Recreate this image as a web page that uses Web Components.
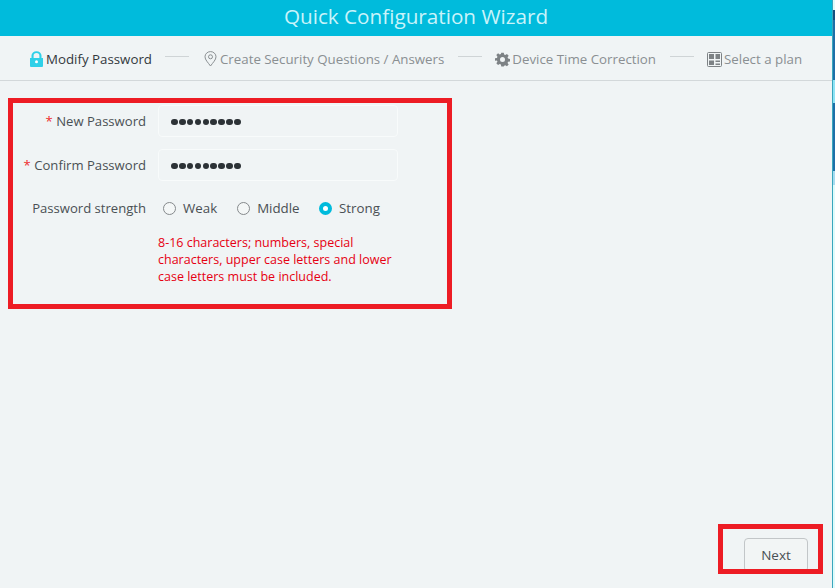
<!DOCTYPE html>
<html>
<head>
<meta charset="utf-8">
<title>Quick Configuration Wizard</title>
<style>
  html, body { margin: 0; height: 100%; overflow: hidden; background: #dffbfb; }
  body { font-family: "Open Sans", "Noto Sans", sans-serif; }
</style>
</head>
<body>

<template id="wizard-step-tpl">
  <style>
    :host { display: flex; align-items: center; gap: 2px; color: #8a8f92; font-size: 13.3px; white-space: nowrap; }
    :host([active]) { color: #33393d; }
    .icon { display: flex; width: 15px; height: 16px; align-items: center; justify-content: center; }
  </style>
  <span class="icon"><slot name="icon"></slot></span>
  <slot></slot>
</template>

<template id="form-row-tpl">
  <style>
    :host { display: flex; align-items: center; font-size: 13.3px; color: #4a5054; }
    .label { width: 133px; text-align: right; margin-right: 12px; white-space: nowrap; flex: none; font-size: 13.1px; }
    .req { color: #ee2b2b; }
  </style>
  <div class="label"><span class="req" id="req"></span><slot name="label"></slot></div>
  <slot></slot>
</template>

<template id="pass-input-tpl">
  <style>
    :host { display: flex; align-items: center; box-sizing: border-box; width: 240px; height: 32px; padding: 2px 0 0 12px;
      border: 1px solid #f8fbfb; border-radius: 4px; color: #2c3236; }
    .dots { display: flex; gap: 1.2px; }
    .dots i { width: 6.7px; height: 6.7px; border-radius: 50%; background: currentColor; }
  </style>
  <div class="dots"><i></i><i></i><i></i><i></i><i></i><i></i><i></i><i></i><i></i></div>
</template>

<template id="radio-opt-tpl">
  <style>
    :host { display: flex; align-items: center; gap: 7px; font-size: 13.3px; color: #4a5054; }
    .dot { box-sizing: border-box; width: 13px; height: 13px; border-radius: 50%; border: 1px solid #85898c; background: #f4f7f7; }
    :host([checked]) .dot { border: 4px solid #00bbdc; background: #fff; }
  </style>
  <span class="dot"></span><slot></slot>
</template>

<script>
  function tplElement(name, tplId, extra) {
    customElements.define(name, class extends HTMLElement {
      constructor() {
        super();
        this.attachShadow({ mode: 'open' });
        this.shadowRoot.appendChild(document.getElementById(tplId).content.cloneNode(true));
      }
      connectedCallback() {
        if (extra) extra(this);
      }
    });
  }

  tplElement('wizard-step', 'wizard-step-tpl');
  tplElement('pass-input', 'pass-input-tpl');
  tplElement('radio-opt', 'radio-opt-tpl');
  tplElement('form-row', 'form-row-tpl', el => {
    if (el.hasAttribute('required')) el.shadowRoot.getElementById('req').textContent = '* ';
  });

  customElements.define('wizard-steps', class extends HTMLElement {
    constructor() {
      super();
      this.attachShadow({ mode: 'open' });
      this.shadowRoot.innerHTML = `
        <style>
          :host { display: flex; align-items: center; height: 45px; box-sizing: border-box; padding: 2px 0 0 29px;
            border-bottom: 1px solid #d3d8da; gap: 13.5px; }
        </style>
        <slot></slot>`;
    }
  });

  customElements.define('step-line', class extends HTMLElement {
    constructor() {
      super();
      this.attachShadow({ mode: 'open' });
      this.shadowRoot.innerHTML = `
        <style>:host { display: block; width: 24px; height: 1px; background: #cfd4d6; margin-top: -5px; }</style>`;
    }
  });

  customElements.define('wizard-form', class extends HTMLElement {
    constructor() {
      super();
      this.attachShadow({ mode: 'open' });
      this.shadowRoot.innerHTML = `
        <style>
          :host { display: block; box-sizing: border-box; width: 444px; height: 211px; margin: 17px 0 0 8px;
            border: 5px solid #ed1c24; padding: 2px 0 0 0; }
          .rows { display: flex; flex-direction: column; }
          ::slotted(form-row) { margin-bottom: 12px; }
          ::slotted(form-row:nth-of-type(3)) { margin-top: 6px; }
          ::slotted(.hint) { margin: 5px 0 0 145px; width: 250px; color: #e60012; font-size: 12.5px; line-height: 17.2px; }
        </style>
        <div class="rows"><slot></slot></div>`;
    }
  });

  customElements.define('next-button', class extends HTMLElement {
    constructor() {
      super();
      this.attachShadow({ mode: 'open' });
      this.shadowRoot.innerHTML = `
        <style>
          :host { display: flex; align-items: center; justify-content: center; box-sizing: border-box; width: 64px; height: 34px;
            border: 1px solid #c2c6c8; border-radius: 4px; background: #f2f5f5; color: #4a5054; font-size: 13.5px; }
        </style>
        <slot></slot>`;
    }
  });

  customElements.define('wizard-app', class extends HTMLElement {
    constructor() {
      super();
      this.attachShadow({ mode: 'open' });
      this.shadowRoot.innerHTML = `
        <style>
          :host { display: flex; flex-direction: column; position: relative; box-sizing: border-box; flex: none; width: 833px; height: 588px;
            background: #f0f4f5; border-right: 1px solid #3aa6bd; font-family: "Open Sans", "Noto Sans", sans-serif; }
          header { height: 36px; box-sizing: border-box; padding-bottom: 5px; background: #00bbdc; color: #c9f3fa; font-size: 20.7px;
            display: flex; align-items: center; justify-content: center; }
          .foot { margin-top: auto; display: flex; justify-content: flex-end; padding: 0 24px 16px 0; }
          .mark { position: absolute; left: 718px; top: 524px; width: 105px; height: 50px; box-sizing: border-box; border: 5px solid #ed1c24; }
        </style>
        <header>Quick Configuration Wizard</header>
        <slot name="steps"></slot>
        <slot name="form"></slot>
        <div class="foot"><slot name="next"></slot></div>
        <div class="mark"></div>`;
    }
  });

  // the sliver of desktop showing right of the window
  customElements.define('desktop-edge', class extends HTMLElement {
    constructor() {
      super();
      this.attachShadow({ mode: 'open' });
      this.shadowRoot.innerHTML = `
        <style>
          :host { display: block; flex: 1; height: 588px;
            background: linear-gradient(#dffbfb 0 10px, #14507f 10px 20px, #1d6fa8 20px 80px, #8fe4f5 80px 103px, #1d6fa8 103px 171px, #a8dcf0 171px 185px, #dffbfb 185px); }
        </style>`;
    }
  });

  customElements.define('page-frame', class extends HTMLElement {
    constructor() {
      super();
      this.attachShadow({ mode: 'open' });
      this.shadowRoot.innerHTML = `<style>:host { display: flex; width: 835px; height: 588px; }</style><slot></slot>`;
    }
  });
</script>

<page-frame>
<wizard-app>
  <wizard-steps slot="steps">
    <wizard-step active>
      <svg slot="icon" width="15" height="16" viewBox="0 0 15 16"><path fill="#2fd0e8" d="M1 7h1.500V4.600a5 4.400 0 0 1 10 0V7H14v8a1 1 0 0 1-1 1H2a1 1 0 0 1-1-1zM4.600 7h5.800V4.600a2.900 2.600 0 0 0-5.800 0z"/><circle cx="7.500" cy="10.800" r="1.500" fill="#fff"/></svg>
      Modify Password
    </wizard-step>
    <step-line></step-line>
    <wizard-step>
      <svg slot="icon" width="13" height="16" viewBox="0 0 13 16"><path fill="none" stroke="#8a8f92" d="M6.500 15C4 11.500 1 8.800 1 5.800a5.500 5.200 0 0 1 11 0c0 3-3 5.700-5.500 9.200z"/><circle cx="6.500" cy="5.800" r="2" fill="none" stroke="#8a8f92"/></svg>
      Create Security Questions / Answers
    </wizard-step>
    <step-line></step-line>
    <wizard-step>
      <svg slot="icon" width="15" height="15" viewBox="0 0 24 24"><path fill="#7d8285" fill-rule="evenodd" d="M10 1h4l.6 3.100 1.900.8 2.600-1.800 2.800 2.800-1.800 2.600.8 1.900 3.100.6v4l-3.100.6-.8 1.900 1.800 2.600-2.800 2.800-2.600-1.800-1.900.8L14 23h-4l-.6-3.100-1.900-.8-2.600 1.800-2.800-2.800 1.800-2.600-.8-1.900L0 14v-4l3.100-.6.8-1.900-1.800-2.600 2.800-2.800 2.600 1.800 1.900-.8zM12 8a4 4 0 1 0 0 8 4 4 0 0 0 0-8z"/></svg>
      Device Time Correction
    </wizard-step>
    <step-line></step-line>
    <wizard-step>
      <svg slot="icon" width="15" height="15" viewBox="0 0 15 15"><rect x=".5" y=".5" width="14" height="14" rx="1" fill="none" stroke="#7d8285"/><path fill="#7d8285" d="M2 2h5v5H2zM8.500 2H13v5H8.500zM2 8.500h5V13H2zM8.500 8.500H13V10H8.500zM8.500 11.500H13V13H8.500z"/></svg>
      Select a plan
    </wizard-step>
  </wizard-steps>

  <wizard-form slot="form">
    <form-row required><span slot="label">New Password</span><pass-input></pass-input></form-row>
    <form-row required><span slot="label">Confirm Password</span><pass-input></pass-input></form-row>
    <form-row>
      <span slot="label">Password strength</span>
      <radio-opt style="margin-left:5px">Weak</radio-opt>
      <radio-opt style="margin-left:20px">Middle</radio-opt>
      <radio-opt style="margin-left:19.500px" checked>Strong</radio-opt>
    </form-row>
    <div class="hint">8-16 characters; numbers, special characters, upper case letters and lower case letters must be included.</div>
  </wizard-form>

  <next-button slot="next">Next</next-button>
</wizard-app>
<desktop-edge></desktop-edge>
</page-frame>

</body>
</html>
